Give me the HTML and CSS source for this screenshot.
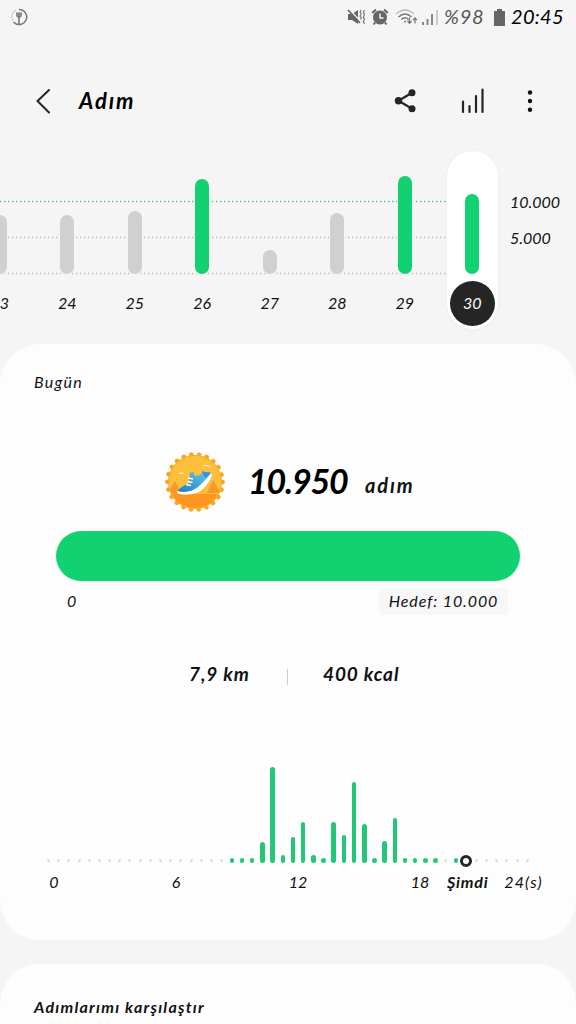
FILE: index.html
```html
<!DOCTYPE html>
<html lang="tr">
<head>
  <meta charset="UTF-8" />
  <meta name="viewport" content="width=device-width, initial-scale=1.0"/>
  <title>Adım</title>
  <link rel="stylesheet" href="styles.css">
</head>
<body>
  <!-- status bar -->
  <div class="status-bar">
    <svg class="fork" width="18" height="18" viewBox="0 0 18 18" fill="none" stroke="#777">
      <path d="M6 2.200A7.200 7.200 0 0 0 3 13" stroke="#ccc" stroke-width="1.200"/>
      <path d="M9 1.500a7.500 7.500 0 1 1-5.500 12.400" stroke-width="1.500"/>
      <path d="M9 9v7" stroke-width="1.600"/>
      <path d="M6.500 4.500h5v3q0 2-2.500 2t-2.500-2z" fill="#999" stroke="none"/>
      <path d="M6.700 4.500v3.200q0 1.600 2.300 1.600t2.300-1.600V4.500M9 4.500V9" stroke-width="1"/>
    </svg>
    <svg class="mute" width="19" height="18" viewBox="0 0 19 18">
      <path d="M1 6h4l6-4v14l-6-4H1z" fill="#666"/>
      <path d="M2 1l12 13" stroke="#f5f5f5" stroke-width="1.500"/>
      <path d="M1 2l12 13" stroke="#666" stroke-width="1.700"/>
      <path d="M14 2l-1 2 1.300 2-1.300 2 1.300 2-1 1.500M17.500 2l-1.200 2.200 1.200 2.300-1.200 2.400 1.200 2.300-1.200 2.300 1.200 2.500" fill="none" stroke="#777" stroke-width="1.200"/>
    </svg>
    <svg class="alarm" width="18" height="18" viewBox="0 0 18 18">
      <path d="M1.200 5L5 1.500M16.800 5L13 1.500M4 14.500L2.500 16.500M14 14.500l1.500 2" stroke="#666" stroke-width="2"/>
      <circle cx="9" cy="9.500" r="7" fill="#666"/>
      <path d="M9 5.500V10h3.500" fill="none" stroke="#f5f5f5" stroke-width="1.400"/>
    </svg>
    <svg class="wifi" width="24" height="18" viewBox="0 0 24 18" fill="none" stroke="#777" stroke-width="1.500">
      <path d="M1 6Q10-2 19 6" stroke="#bbb"/>
      <path d="M3.500 9Q10 3 16.500 9M6.300 11.500Q10 8 13.500 11.500"/>
      <circle cx="10" cy="13.500" r="1" fill="#777" stroke="none"/>
      <path d="M14.500 9.500V15M12.500 13l2 2.300 2-2.300M20 15.500V10M18 12.200l2-2.200 2 2.200" stroke-width="1.200"/>
    </svg>
    <svg class="signal" width="18" height="18" viewBox="0 0 18 18" stroke="#888" stroke-width="2">
      <path d="M2 17v-3M6.500 17v-6M11 17V6"/>
      <path d="M16 17V2" stroke="#ccc"/>
    </svg>
    <span class="percent">%98</span>
    <svg class="battery" width="11" height="17" viewBox="0 0 11 17"><path d="M3 0h5v2h3v15H0V2h3z" fill="#666"/></svg>
    <span class="clock">20:45</span>
  </div>

  <!-- title bar -->
  <div class="header">
    <svg class="back" width="16" height="28" viewBox="0 0 16 28" fill="none" stroke="#252525" stroke-width="2" stroke-linecap="round"><path d="M14 3L2.500 14l11.500 11.500"/></svg>
    <h1>Adım</h1>
    <svg class="share" width="24" height="26" viewBox="0 0 24 26" fill="#252525">
      <path d="M18 4.700L4.500 12.700l13.500 8" fill="none" stroke="#252525" stroke-width="2.200"/>
      <circle cx="4.500" cy="12.700" r="3.700"/><circle cx="18" cy="4.700" r="3.500"/><circle cx="18" cy="20.700" r="3.500"/>
    </svg>
    <svg class="trend" width="26" height="28" viewBox="0 0 26 28" stroke="#252525" stroke-width="2.200" stroke-linecap="round"><path d="M3 14.500V25M9.500 19v6M16 9v16M22.500 2.500V25"/></svg>
    <svg class="more" width="6" height="24" viewBox="0 0 6 24" fill="#111"><circle cx="3" cy="3.500" r="2.200"/><circle cx="3" cy="12" r="2.200"/><circle cx="3" cy="20.700" r="2.200"/></svg>
  </div>

  <!-- daily chart -->
  <div class="daily">
    <svg class="grid-lines" width="447" height="80" viewBox="0 0 447 80" stroke-width="1.300" stroke-dasharray="1.300 2.700">
      <path d="M0 3.500h447" stroke="#4cc596"/>
      <path d="M0 39.500h447M0 75.500h447" stroke="#bbb"/>
    </svg>
    <div class="days" id="days"></div>
    <div class="scale"><span>10.000</span><span>5.000</span></div>
  </div>

  <!-- today -->
  <div class="card today">
    <h2>Bugün</h2>
    <div class="total">
      <svg class="badge" width="62" height="62" viewBox="0 0 62 62">
        <defs>
          <linearGradient id="shoe" x1="1" y1="0" x2="0" y2="1"><stop offset="0" stop-color="#6bcdf2"/><stop offset="1" stop-color="#1f7ab8"/></linearGradient>
          <clipPath id="disc"><circle cx="31" cy="31" r="26"/></clipPath>
        </defs>
        <circle cx="31" cy="31" r="27" fill="#f8a820"/>
        <circle cx="31" cy="31" r="27.600" fill="none" stroke="#f8a820" stroke-width="4.600" stroke-linecap="round" stroke-dasharray="0.100 7.782"/>
        <g clip-path="url(#disc)">
          <path d="M0 0h62v62H0z" fill="#fbbf3c"/>
          <path d="M3 43l8-13 7 13zM43 42l6-13 8 13z" fill="#f49a27"/>
          <path d="M0 43h62v19H0z" fill="#fc9620"/>
        </g>
        <path d="M14 23q3-4 7 0zM38 15q5-3 9 1z" fill="#fde3a0"/>
        <path d="M14 40q2-4 11-8l1-10 3-1 2 4q6 0 8-5 3 2 7 1l1 4q-4 7-10 12-9 7-23 4z" fill="url(#shoe)"/>
        <path d="M38 20q4 2 8 1l1 3-4 4q-4-3-5-8z" fill="#3598d0"/>
        <path d="M13 40q12 3 21-4 7-6 13-14l1 3q-5 11-13 16-9 4-19 2-3 0-3-3z" fill="#fff"/>
        <path d="M24 27l5 1M23.500 30.500l5 1M22 33.500l5 1" stroke="#fff" stroke-width="1.300"/>
      </svg>
      <span class="count">10.950</span>
      <span class="unit">adım</span>
    </div>
    <div class="progress"></div>
    <div class="range"><span class="min">0</span><span class="goal">Hedef: 10.000</span></div>
    <div class="stats"><span class="km">7,9 km</span><i></i><span class="kcal">400 kcal</span></div>
    <div class="hours" id="hours"></div>
    <div class="hour-labels">
      <span>0</span><span>6</span><span>12</span><span class="eighteen">18</span><span class="now-label">Şimdi</span><span class="end">24(s)</span>
    </div>
  </div>

  <div class="card compare">
    <h2>Adımlarımı karşılaştır</h2>
  </div>

  <script>
    const days = [[23, 59], [24, 59], [25, 63], [26, 95], [27, 24], [28, 61], [29, 98], [30, 80]];
    const goalDays = [26, 29, 30];
    document.getElementById('days').innerHTML = days.map(([day, h]) =>
      `<div class="day${goalDays.includes(day) ? ' reached' : ''}${day === 30 ? ' selected' : ''}">
        <div class="bar" style="height:${h}px"></div><span>${day}</span>
      </div>`).join('');

    // one value for each half hour
    const steps = { 18: 5, 19: 5, 20: 5, 21: 21, 22: 96, 23: 8, 24: 26, 25: 41, 26: 8, 27: 5, 28: 41, 29: 28,
      30: 81, 31: 39, 32: 5, 33: 22, 34: 45, 35: 5, 36: 5, 37: 5, 38: 5, 40: 5 };
    let html = '';
    for (let i = 0; i < 48; i++) {
      if (i === 41) html += '<div><b class="now"></b></div>';
      else if (steps[i]) html += `<div><b style="height:${steps[i]}px"></b></div>`;
      else html += '<div><b class="empty"></b></div>';
    }
    document.getElementById('hours').innerHTML = html;
  </script>
</body>
</html>
```

FILE: styles.css
```css
* {
  box-sizing: border-box;
}
body {
  margin: 0;
  width: 576px;
  height: 1024px;
  overflow: hidden;
  background: #f5f5f5;
  color: #111;
  font-family: Lato, "Liberation Sans", sans-serif;
  font-style: italic;
  font-size: 16px;
}
svg {
  display: block;
  flex: none;
}
h1, h2 {
  margin: 0;
}
.status-bar {
  height: 34px;
  display: flex;
  align-items: center;
  padding-left: 10px;
  white-space: nowrap;
}
.mute {
  margin-left: 319px;
}
.alarm {
  margin-left: 5px;
}
.wifi {
  margin-left: 6px;
}
.signal {
  margin-left: 2px;
}
.percent {
  width: 43px;
  margin-left: 5px;
  font-size: 20px;
  letter-spacing: 0.8px;
  color: #555;
}
.battery {
  margin-left: 7px;
}
.clock {
  margin-left: 6px;
  font-size: 20px;
  letter-spacing: 0.3px;
  color: #000;
}
.percent, .clock {
  line-height: 22px;
  padding-bottom: 2px;
}
.header {
  height: 134px;
  display: flex;
  align-items: center;
  padding-left: 35px;
}
.header h1 {
  width: 315px;
  margin-left: 28px;
  padding-bottom: 2px;
  font-size: 22px;
  letter-spacing: 1.9px;
  color: #000;
}
.trend {
  margin-left: 42px;
}
.more {
  margin-left: 41px;
}
.daily {
  position: relative;
  height: 176px;
  margin-top: -17px;
  display: flex;
}
.grid-lines {
  position: absolute;
  left: 0;
  top: 47px;
}
.days {
  position: relative;
  flex: none;
  display: grid;
  grid-template-columns: repeat(8, 67.5px);
  margin-left: -34px;
}
.day {
  width: 51px;
  height: 178px;
  justify-self: center;
  display: flex;
  flex-direction: column;
  align-items: center;
  justify-content: flex-end;
  padding-bottom: 3px;
}
.bar {
  width: 14px;
  border-radius: 7px;
  background: #d0d0d0;
  box-shadow: 0 0 0 1px #f5f5f5;
}
.day span {
  width: 45px;
  height: 45px;
  margin-top: 7px;
  line-height: 44px;
  text-align: center;
  border-radius: 50%;
}
.reached .bar {
  background: #12d170;
}
.selected {
  background: #fff;
  border-radius: 26px;
  box-shadow: 0 1px 4px rgba(0, 0, 0, 0.04);
}
.selected .bar {
  box-shadow: none;
}
.selected span {
  background: #252525;
  color: #fff;
}
.scale {
  display: flex;
  flex-direction: column;
  padding: 41px 0 0 4px;
}
.scale span {
  height: 36px;
  line-height: 20px;
}
.card {
  background: #fdfdfd;
  border-radius: 40px;
}
.card h2 {
  padding-left: 34px;
  font-size: 16px;
  letter-spacing: 1.25px;
}
.today {
  height: 596px;
  margin-top: 17px;
  padding-top: 28px;
}
.today h2 {
  line-height: 20px;
  font-weight: normal;
}
.total {
  height: 62px;
  margin-top: 59px;
  padding-left: 164px;
  display: flex;
  align-items: center;
}
.count {
  width: 117px;
  margin-left: 22px;
  padding-bottom: 4px;
  font-size: 34px;
  font-weight: bold;
  letter-spacing: -1.2px;
  color: #000;
}
.unit {
  font-size: 20px;
  font-weight: bold;
  letter-spacing: 1.9px;
  padding-top: 5px;
}
.progress {
  width: 464px;
  height: 50px;
  margin: 18px 0 0 56px;
  border-radius: 25px;
  background: #12d170;
}
.range {
  display: flex;
  justify-content: space-between;
  margin: 7px 68px 0 67px;
  line-height: 25px;
}
.goal {
  width: 129px;
  height: 27px;
  text-align: center;
  background: #f7f7f7;
  border-radius: 4px;
  letter-spacing: 0.9px;
}
.stats {
  display: flex;
  align-items: center;
  height: 24px;
  margin-top: 47px;
  padding-left: 189px;
  font-size: 19px;
  font-weight: bold;
  letter-spacing: 0.9px;
}
.km, .kcal {
  padding-bottom: 2px;
}
.km {
  width: 98px;
}
.stats i {
  width: 1px;
  height: 16px;
  margin: 5px 35px 0 0;
  background: #ccc;
}
.hours {
  display: grid;
  grid-template-columns: repeat(48, 10.2px);
  align-items: end;
  height: 100px;
  margin: 77px 0 0 43.4px;
}
.hours div {
  display: flex;
  justify-content: center;
}
.hours b {
  flex: none;
  width: 4.5px;
  border-radius: 2.5px;
  background: #22c777;
}
.hours .empty {
  width: 3px;
  height: 3px;
  margin-bottom: 1px;
  background: #ddd;
}
.hours .now {
  width: 12px;
  height: 12px;
  margin-bottom: -4px;
  border: 3px solid #252525;
  border-radius: 50%;
  background: #fff;
}
.hour-labels {
  display: grid;
  grid-template-columns: 122px 122px 122px 34px 54px 40px 73px;
  margin: 9px 0 0 -7px;
  line-height: 20px;
  text-align: center;
}
.eighteen {
  grid-column: 5;
}
.now-label {
  font-weight: bold;
  letter-spacing: 0.8px;
}
.end {
  letter-spacing: 1.1px;
}
.compare {
  height: 100px;
  margin-top: 24px;
  padding-top: 32px;
}
.compare h2 {
  line-height: 22px;
}
```
